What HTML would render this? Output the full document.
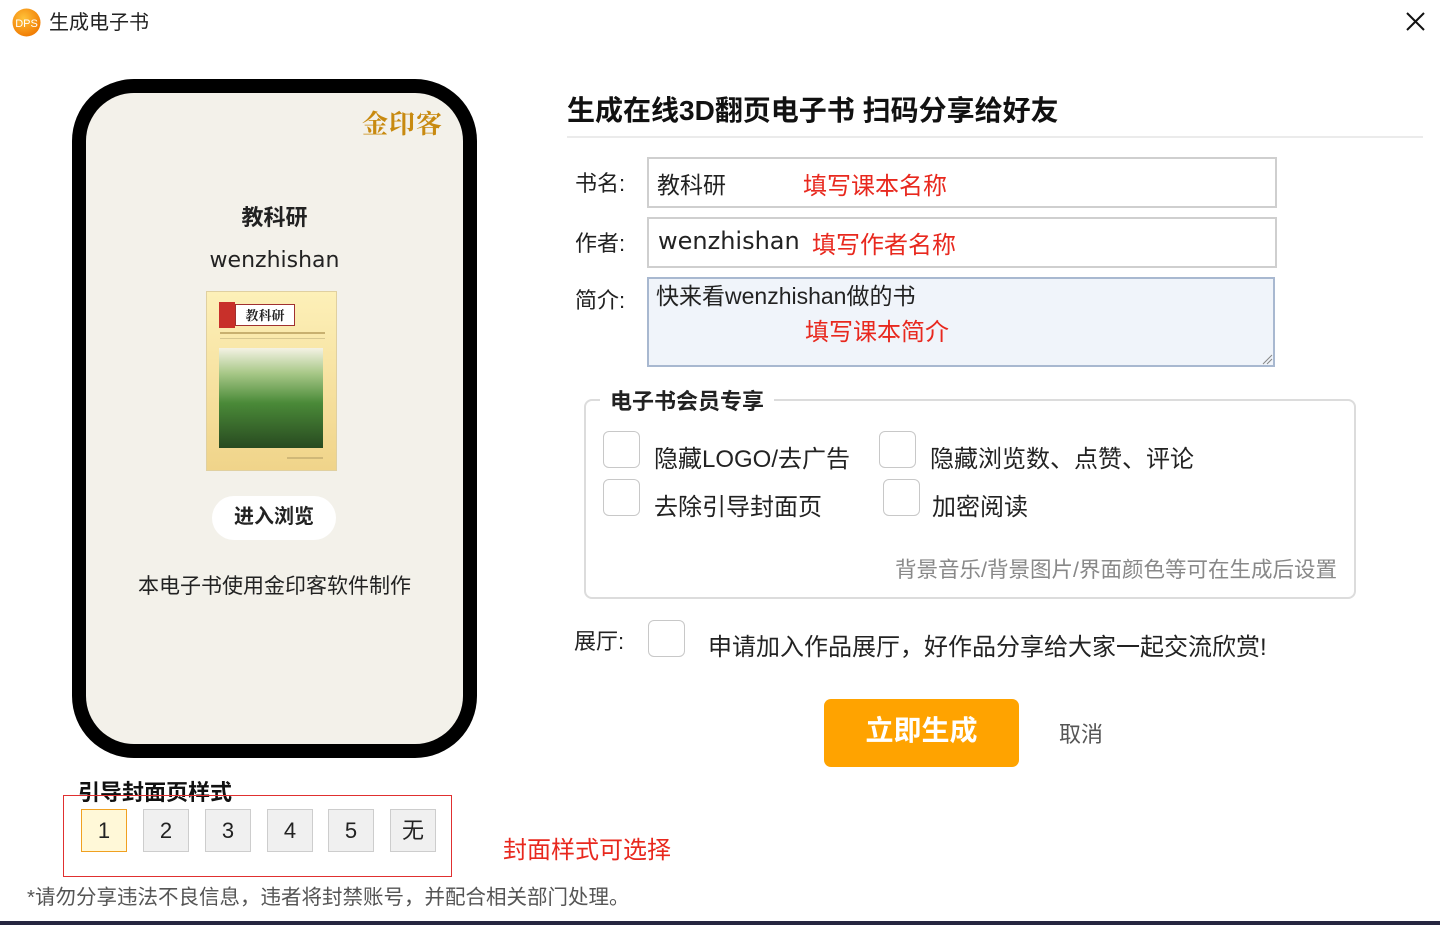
<!DOCTYPE html>
<html><head><meta charset="utf-8"><style>
*{margin:0;padding:0;box-sizing:border-box}
body{width:1440px;height:925px;background:#fff;position:relative;overflow:hidden;font-family:"Liberation Sans","Noto Sans CJK SC",sans-serif;color:#222}
.a{position:absolute;white-space:nowrap}
.cb{position:absolute;width:37px;height:37px;border:1.5px solid #c8c8c8;border-radius:6px;background:#fff}
.inp{position:absolute;border:2px solid #cfcfcf;background:#fff}
.lbl{position:absolute;font-size:22px;color:#222}
.red{color:#e8281e}
.nb{position:absolute;top:809px;width:46px;height:43px;border:1.5px solid #cdcdcd;background:#f0f0f0;font-size:22px;text-align:center;line-height:41px;color:#222}
</style></head><body>
<svg class="a" style="left:12px;top:8px" width="29" height="29" viewBox="0 0 29 29"><defs><radialGradient id="g" cx="40%" cy="35%" r="70%"><stop offset="0" stop-color="#ffc23a"/><stop offset="1" stop-color="#f07800"/></radialGradient></defs><circle cx="14.5" cy="14.5" r="14" fill="url(#g)"/><text x="14.5" y="19" font-size="11" fill="#fff" text-anchor="middle" font-family="Liberation Sans">DPS</text></svg>
<div class="a" style="left:49px;top:6px;font-size:20px;color:#222">生成电子书</div>
<svg class="a" style="left:1405px;top:11px" width="21" height="21"><path d="M2 2L19 19M19 2L2 19" stroke="#111" stroke-width="2"/></svg>

<div class="a" style="left:72px;top:79px;width:405px;height:679px;background:#000;border-radius:62px"></div>
<div class="a" style="left:86px;top:93px;width:377px;height:651px;background:#f3f1ea;border-radius:48px"></div>
<div class="a" style="left:362px;top:104px;font-size:26px;font-weight:bold;color:#c88a10;font-family:'Noto Serif CJK SC',serif;letter-spacing:1px">金印客</div>
<div class="a" style="left:86px;width:377px;top:200px;text-align:center;font-size:22px;font-weight:bold">教科研</div>
<div class="a" style="left:86px;width:377px;top:248px;text-align:center;font-size:22px;font-family:'DejaVu Sans',sans-serif">wenzhishan</div>
<div class="a" style="left:206px;top:291px;width:131px;height:180px;background:linear-gradient(#fdf0b8,#f0d48a);border:1px solid #e0d0a0">
 <div class="a" style="left:12px;top:10px;width:16px;height:26px;background:#c8302a"></div>
 <div class="a" style="left:28px;top:12px;width:60px;height:22px;background:#fff;border:1px solid #a03030;font-size:13px;font-weight:bold;text-align:center;line-height:20px;font-family:'Noto Serif CJK SC',serif">教科研</div>
 <div class="a" style="left:13px;top:40px;width:105px;height:2px;background:#c8b070"></div>
 <div class="a" style="left:13px;top:46px;width:105px;height:1px;background:#d8c890"></div>
 <div class="a" style="left:12px;top:56px;width:104px;height:100px;background:linear-gradient(#f4f2e4 0%,#a8c888 25%,#4a8a38 55%,#284a20 100%)"></div>
 <div class="a" style="left:80px;top:165px;width:36px;height:2px;background:#d0b878"></div>
</div>
<div class="a" style="left:212px;top:496px;width:124px;height:44px;background:#fff;border-radius:22px;text-align:center;line-height:42px;font-size:20px;font-weight:bold">进入浏览</div>
<div class="a" style="left:86px;width:377px;top:570px;text-align:center;font-size:21px">本电子书使用金印客软件制作</div>

<div class="a" style="left:567px;top:89px;font-size:28px;font-weight:bold;color:#111">生成在线3D翻页电子书 扫码分享给好友</div>
<div class="a" style="left:567px;top:136px;width:856px;height:2px;background:#ebebeb"></div>

<div class="lbl" style="left:575px;top:166px">书名:</div>
<div class="inp" style="left:647px;top:157px;width:630px;height:51px"></div>
<div class="a" style="left:657px;top:166px;font-size:23px">教科研</div>
<div class="a red" style="left:803px;top:166px;font-size:24px">填写课本名称</div>

<div class="lbl" style="left:575px;top:226px">作者:</div>
<div class="inp" style="left:647px;top:217px;width:630px;height:51px"></div>
<div class="a" style="left:658px;top:227px;font-size:24px;font-family:'DejaVu Sans',sans-serif">wenzhishan</div>
<div class="a red" style="left:812px;top:225px;font-size:24px">填写作者名称</div>

<div class="lbl" style="left:575px;top:283px">简介:</div>
<div class="inp" style="left:647px;top:277px;width:628px;height:90px;background:#f0f4fa;border-color:#a8b8d0"></div>
<div class="a" style="left:656px;top:277px;font-size:23px">快来看wenzhishan做的书</div>
<div class="a red" style="left:805px;top:312px;font-size:24px">填写课本简介</div>
<svg class="a" style="left:1261px;top:353px" width="12" height="12"><path d="M2 11L11 2M6 11L11 6" stroke="#888" stroke-width="1"/></svg>

<div class="a" style="left:584px;top:399px;width:772px;height:200px;border:2px solid #dcdcdc;border-radius:8px"></div>
<div class="a" style="left:600px;top:384px;background:#fff;padding:0 10px;font-size:22px;font-weight:bold">电子书会员专享</div>
<div class="cb" style="left:603px;top:431px"></div>
<div class="a" style="left:654px;top:439px;font-size:24px">隐藏LOGO/去广告</div>
<div class="cb" style="left:879px;top:431px"></div>
<div class="a" style="left:930px;top:439px;font-size:24px">隐藏浏览数、点赞、评论</div>
<div class="cb" style="left:603px;top:479px"></div>
<div class="a" style="left:654px;top:487px;font-size:24px">去除引导封面页</div>
<div class="cb" style="left:883px;top:479px"></div>
<div class="a" style="left:932px;top:487px;font-size:24px">加密阅读</div>
<div class="a" style="right:103px;top:553px;font-size:21.5px;color:#888">背景音乐/背景图片/界面颜色等可在生成后设置</div>

<div class="lbl" style="left:574px;top:624px">展厅:</div>
<div class="cb" style="left:648px;top:620px"></div>
<div class="a" style="left:708px;top:627px;font-size:24px">申请加入作品展厅，好作品分享给大家一起交流欣赏!</div>

<div class="a" style="left:824px;top:699px;width:195px;height:68px;background:#ffa300;border-radius:7px;color:#fff;font-size:28px;font-weight:bold;text-align:center;line-height:64px">立即生成</div>
<div class="a" style="left:1059px;top:717px;font-size:22px;color:#555">取消</div>

<div class="a" style="left:78px;top:775px;font-size:22px;font-weight:bold;color:#111">引导封面页样式</div>
<div class="a" style="left:63px;top:795px;width:389px;height:82px;border:1.5px solid #e03030"></div>
<div class="nb" style="left:81px;background:#fff8d8;border-color:#f0a020">1</div>
<div class="nb" style="left:143px">2</div>
<div class="nb" style="left:205px">3</div>
<div class="nb" style="left:267px">4</div>
<div class="nb" style="left:328px">5</div>
<div class="nb" style="left:390px">无</div>
<div class="a red" style="left:503px;top:830px;font-size:24px">封面样式可选择</div>
<div class="a" style="left:27px;top:880px;font-size:20.5px;color:#555">*请勿分享违法不良信息，违者将封禁账号，并配合相关部门处理。</div>
<div class="a" style="left:0;top:921px;width:1440px;height:4px;background:#262640"></div>
</body></html>
